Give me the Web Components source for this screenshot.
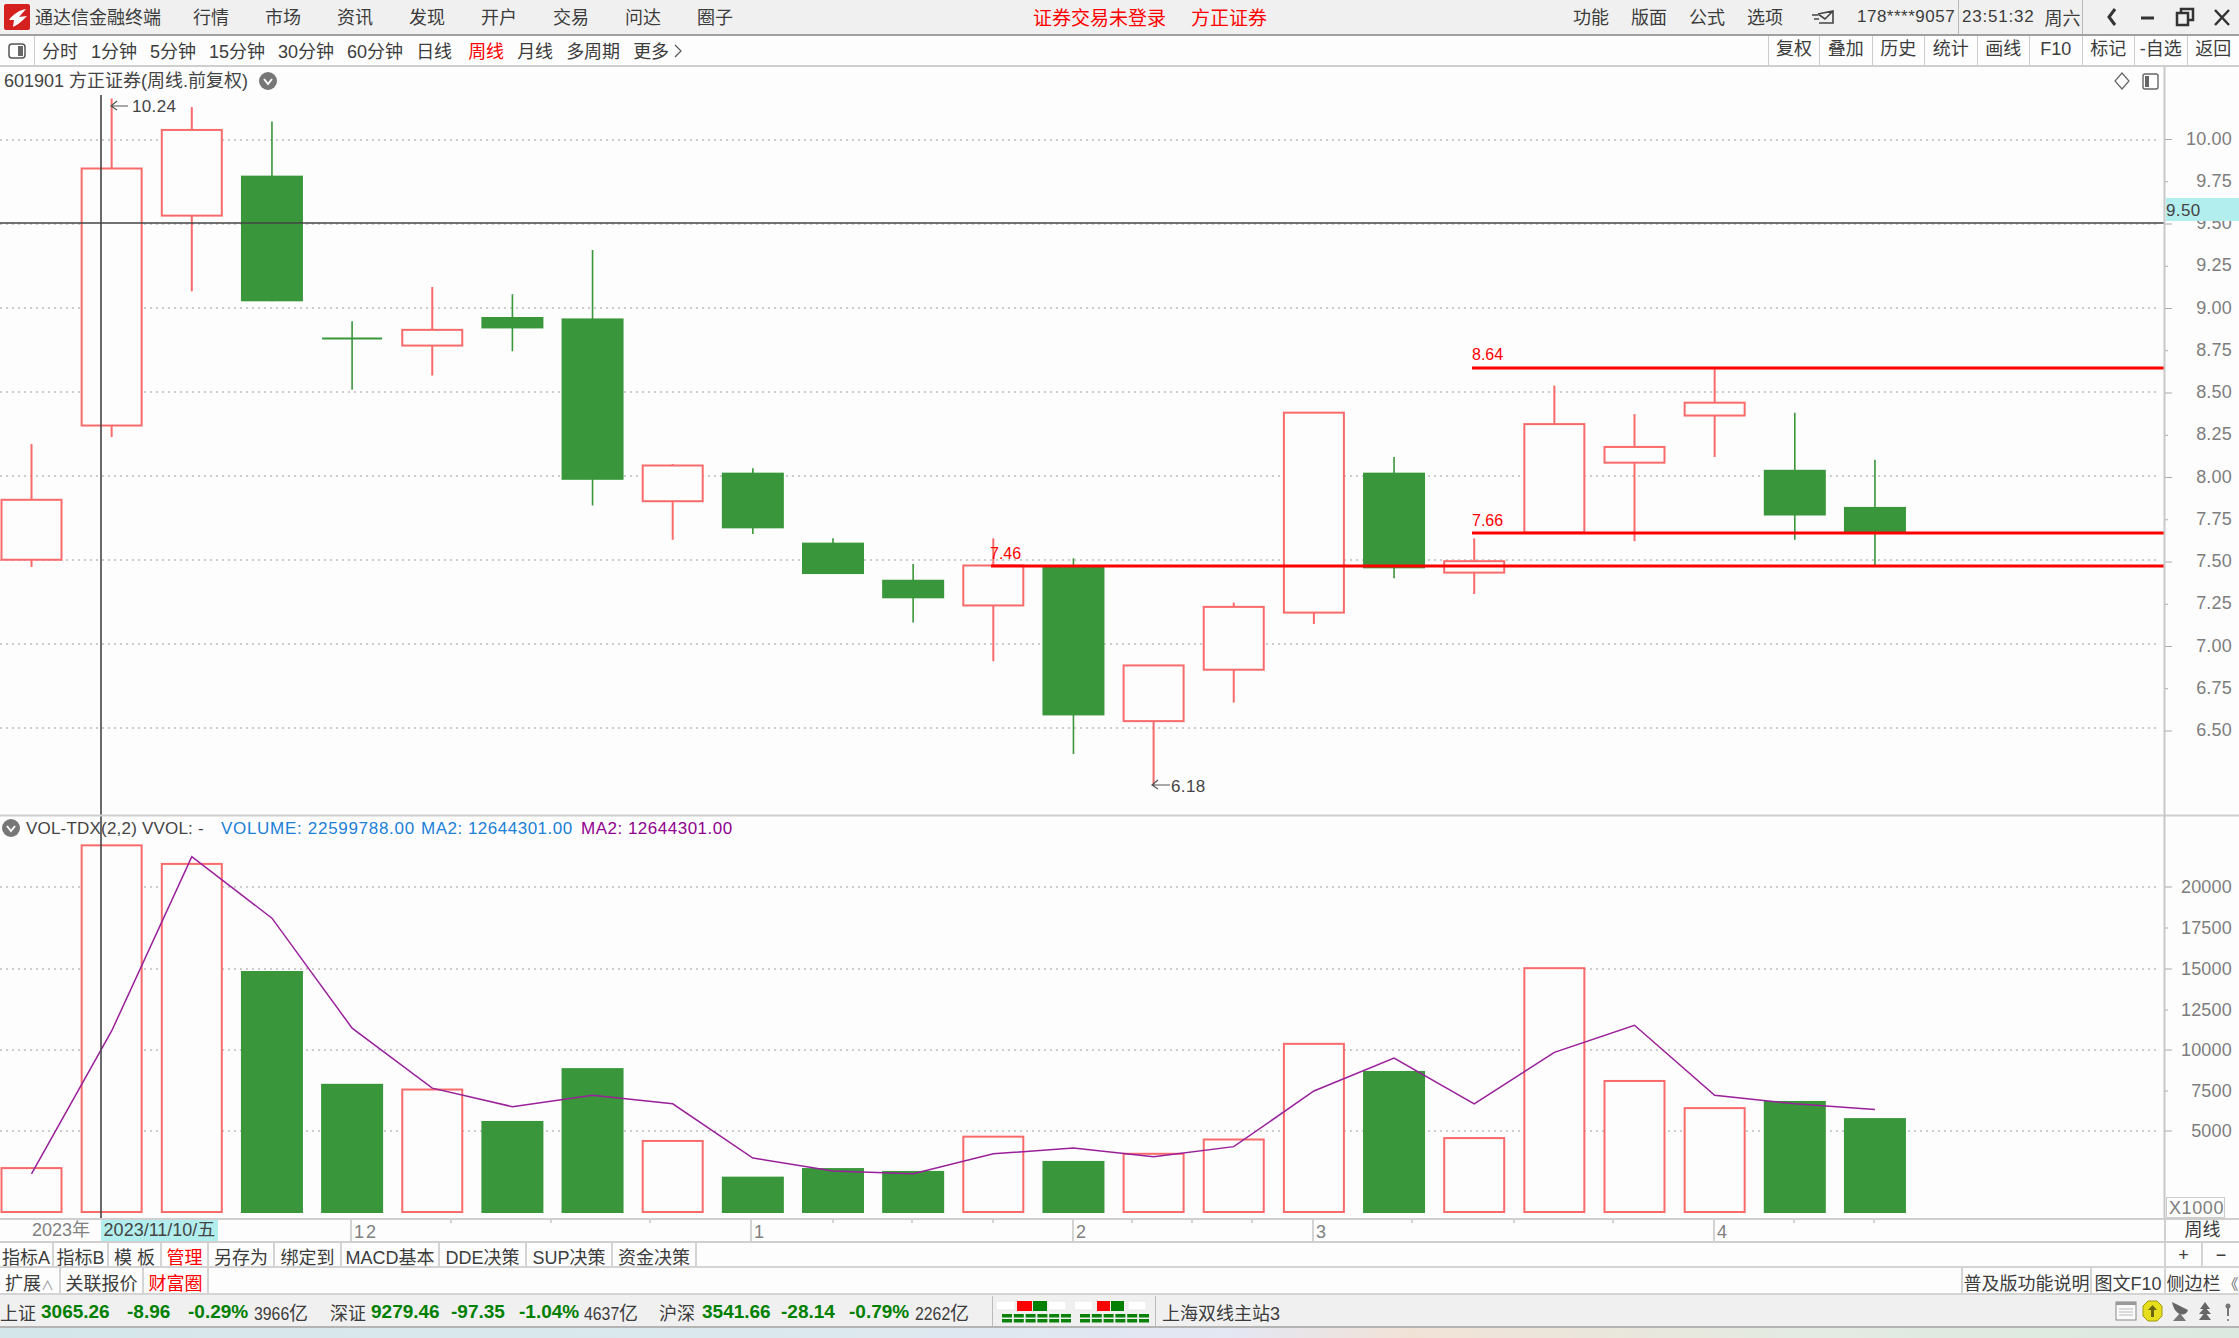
<!DOCTYPE html>
<html lang="zh">
<head>
<meta charset="utf-8">
<title>通达信金融终端</title>
<style>
  html, body { margin: 0; padding: 0; background: #fdfdfd; overflow: hidden; }
  body { width: 2239px; height: 1338px; display: flex; flex-direction: column;
    font: 18px "Liberation Sans", "Noto Sans CJK SC", sans-serif; color: #3c3c3c; }
</style>
</head>
<body>
<tdx-titlebar></tdx-titlebar>
<tdx-toolbar></tdx-toolbar>
<tdx-kline></tdx-kline>
<tdx-dateaxis></tdx-dateaxis>
<tdx-tabrow h="23">
  <tdx-tab w="54">指标A</tdx-tab><tdx-tab w="55">指标B</tdx-tab><tdx-tab w="53">模 板</tdx-tab>
  <tdx-tab w="47" red>管理</tdx-tab><tdx-tab w="66">另存为</tdx-tab><tdx-tab w="67">绑定到</tdx-tab>
  <tdx-tab w="98">MACD基本</tdx-tab><tdx-tab w="87">DDE决策</tdx-tab><tdx-tab w="86">SUP决策</tdx-tab>
  <tdx-tab w="84">资金决策</tdx-tab>
  <tdx-tab slot="right" w="37">+</tdx-tab><tdx-tab slot="right" w="38">−</tdx-tab>
</tdx-tabrow>
<tdx-tabrow h="25">
  <tdx-tab w="61">扩展<small style="color:#999;font-size:13px">∧</small></tdx-tab><tdx-tab w="83">关联报价</tdx-tab><tdx-tab w="65" red>财富圈</tdx-tab>
  <tdx-tab slot="right" w="129">普及版功能说明</tdx-tab><tdx-tab slot="right" w="74">图文F10</tdx-tab><tdx-tab slot="right" w="75">侧边栏 <small style="color:#666;font-size:15px;margin-left:-2px">《</small></tdx-tab>
</tdx-tabrow>
<tdx-statusbar></tdx-statusbar>
<tdx-desktop></tdx-desktop>

<script>
// Top window bar: logo, menus, red login notice, clock and window buttons
class TdxTitlebar extends HTMLElement {
  connectedCallback() {
    const menus = ['行情', '市场', '资讯', '发现', '开户', '交易', '问达', '圈子'];
    const right = ['功能', '版面', '公式', '选项'];
    this.attachShadow({ mode: 'open' }).innerHTML = `
      <style>
        :host { display: flex; align-items: center; height: 34px; flex: none; background: #f0f0f0;
          border-bottom: 2px solid #a0a0a0; white-space: nowrap; position: relative; }
        .logo { width: 26px; height: 26px; margin-left: 4px; flex: none; }
        .name { margin: -2px 0 0 5px; width: 158px; }
        .menus { display: flex; gap: 36px; width: 840px; margin-top: -2px; }
        .notice { color: #f00; font-size: 19px; width: 135px; margin-top: -2px; }
        .notice.b { margin-left: 23px; width: 382px; }
        .right { display: flex; gap: 22px; width: 238px; margin-top: -2px; }
        .mail { width: 24px; height: 18px; margin-right: 22px; flex: none; }
        .user { width: 101px; letter-spacing: .5px; font-size: 17px; }
        .clock { width: 125px; height: 34px; box-sizing: border-box; display: flex; align-items: center;
          border-left: 1px solid #b8b8b8; border-right: 1px solid #b8b8b8; padding-left: 3px; font-size: 17px; letter-spacing: .8px; }
        .clock span { margin-left: 10px; font-size: 18px; letter-spacing: 0; }
        svg.btn { width: 156px; height: 34px; flex: none; }
      </style>
      <svg class="logo" viewBox="0 0 26 26"><rect width="26" height="26" rx="2" fill="#d4201f"/>
        <path d="M22 5 C16 6 9 10 5 16 L10 16 L9 23 C14 21 19 16 23 12 L15 13 Z" fill="#fff"/></svg>
      <span class="name">通达信金融终端</span>
      <div class="menus">${menus.map(m => `<span>${m}</span>`).join('')}</div>
      <span class="notice">证券交易未登录</span><span class="notice b">方正证券</span>
      <div class="right">${right.map(m => `<span>${m}</span>`).join('')}</div>
      <svg class="mail" viewBox="0 0 24 18" fill="none" stroke="#444" stroke-width="1.6">
        <path d="M7 6 L22 3 V15 H8 M1 7 H7 M3 11 H8 M7 6 L14 11 L22 3"/></svg>
      <span class="user">178****9057</span>
      <div class="clock">23:51:32<span>周六</span></div>
      <svg class="btn" viewBox="0 0 156 34" fill="none" stroke="#333" stroke-width="3">
        <path d="M32 9 L26 17 L32 25"/><path d="M58 18 H71" />
        <rect x="94" y="13" width="11" height="12" stroke-width="2.5"/><path d="M98 12 V9 H110 V20 H106" stroke-width="2.5"/>
        <path d="M132 10 L146 25 M146 10 L132 25" stroke-width="2.5"/>
      </svg>`;
  }
}

// Period selector and the right hand function buttons
class TdxToolbar extends HTMLElement {
  connectedCallback() {
    const periods = ['分时', '1分钟', '5分钟', '15分钟', '30分钟', '60分钟', '日线', '周线', '月线', '多周期'];
    const tools = ['复权', '叠加', '历史', '统计', '画线', 'F10', '标记', '-自选', '返回'];
    this.attachShadow({ mode: 'open' }).innerHTML = `
      <style>
        :host { display: flex; align-items: center; height: 29px; flex: none; background: #fdfdfd;
          border-bottom: 2px solid #cfcfcf; white-space: nowrap; }
        .toggle { width: 35px; height: 29px; box-sizing: border-box; border-right: 1px solid #ccc; flex: none;
          display: flex; align-items: center; justify-content: center; }
        .periods { display: flex; gap: 13px; padding-left: 7px; flex: 1; align-items: center; margin-top: -2px; }
        .on { color: #f00; margin-left: 3px; }
        .tools { display: grid; grid-template-columns: 51px repeat(8, 52.5px); }
        .tools span { text-align: center; border-left: 1px solid #ccc; line-height: 27px; padding-bottom: 2px; box-sizing: border-box; }
      </style>
      <div class="toggle"><svg width="18" height="16" viewBox="0 0 18 16"><rect x="1" y="1" width="16" height="14" rx="3" fill="#fff" stroke="#555" stroke-width="1.5"/><rect x="10" y="3" width="5" height="10" fill="#666"/></svg></div>
      <div class="periods">
        ${periods.map(p => `<span class="${p === '周线' ? 'on' : ''}">${p}</span>`).join('')}
        <span>更多 <svg width="8" height="14" viewBox="0 0 8 14" fill="none" stroke="#555" stroke-width="1.2"><path d="M1 1 L7 7 L1 13"/></svg></span>
      </div>
      <div class="tools">${tools.map(t => `<span>${t}</span>`).join('')}</div>`;
  }
}

// Candles and volume bars, drawn in one svg using page coordinates
const UNIT = 168;
const priceY = p => 476 + (8 - p) * UNIT;
const centerX = i => 31.5 + i * 80.15;
const S = 1338 / 937;

// [wick top, body top, body bottom, wick bottom, up?, volume top] in the 1568 wide scale
const BARS = [
  [311, 350, 392, 397, 1, 818], [69, 118, 298, 306, 1, 592], [75, 91, 151, 204, 1, 605],
  [85, 123, 211, 211, 0, 680], [225, 237, 237, 273, 0, 759], [201, 231, 242, 263, 1, 763],
  [206, 222, 230, 246, 0, 785], [175, 223, 336, 354, 0, 748], [325, 326, 351, 378, 1, 799],
  [328, 331, 370, 374, 0, 824], [377, 380, 402, 402, 0, 818], [395, 406, 419, 436, 0, 820],
  [377, 396, 424, 463, 1, 796], [391, 397, 501, 528, 0, 813], [466, 466, 505, 550, 1, 808],
  [422, 425, 469, 492, 1, 798], [289, 289, 429, 437, 1, 731], [320, 331, 398, 405, 0, 750],
  [377, 393, 401, 416, 1, 797], [270, 297, 373, 373, 1, 678], [290, 313, 324, 379, 1, 757],
  [258, 282, 291, 320, 1, 776], [289, 329, 361, 378, 0, 771], [322, 355, 373, 396, 0, 783]
];
const MA = [822, 722, 600, 643, 720, 762, 775, 767, 773, 811, 820, 822, 808, 804, 810, 803, 764, 741, 773, 737, 718, 767, 773, 777];
const VOL_LEVELS = [[20000, 887], [17500, 928], [15000, 969], [12500, 1010], [10000, 1050], [7500, 1091], [5000, 1131]];

class TdxKline extends HTMLElement {
  connectedCallback() {
    let s = '';
    const RED = '#f96b6b', GREEN = '#39963a';
    // grid lines and axis
    for (let p = 10; p >= 6.5; p -= 0.5) s += `<line class="dot" x1="0" x2="2158" y1="${priceY(p)}" y2="${priceY(p)}"/>`;
    for (const [v, y] of VOL_LEVELS) {
      if (v % 5000 === 0) s += `<line class="dot" x1="0" x2="2158" y1="${y}" y2="${y}"/>`;
      s += `<line class="tick" x1="2165" x2="${v % 5000 === 0 ? 2172 : 2168}" y1="${y}" y2="${y}"/><text class="ax" x="2232" y="${y + 6}" text-anchor="end">${v}</text>`;
    }
    for (let p = 10; p >= 6.5; p -= 0.25) {
      const y = 139.5 + (10 - p) * 169;
      s += `<line class="tick" x1="2165" x2="${(p * 2) % 1 === 0 ? 2172 : 2168}" y1="${y}" y2="${y}"/><text class="ax" x="2232" y="${y + 5}" text-anchor="end">${p.toFixed(2)}</text>`;
    }
    // candles
    BARS.forEach((b, i) => {
      const x = centerX(i), [wt, bt, bb, wb, up, vt] = b.map((v, k) => k === 4 ? v : v * S);
      const col = up ? RED : GREEN;
      s += `<line x1="${x}" x2="${x}" y1="${wt}" y2="${wb}" stroke="${col}" stroke-width="${up ? 2 : 1.6}"/>`;
      if (bb - bt < 2) s += `<line x1="${x - 30}" x2="${x + 30}" y1="${bt}" y2="${bt}" stroke="${col}" stroke-width="2"/>`;
      else if (up) s += `<rect x="${x - 30}" y="${bt}" width="60" height="${bb - bt}" fill="#fdfdfd" stroke="${col}" stroke-width="2"/>`;
      else s += `<rect x="${x - 31}" y="${bt}" width="62" height="${bb - bt}" fill="${col}"/>`;
      if (up) s += `<rect x="${x - 30}" y="${vt}" width="60" height="${1212 - vt}" fill="#fdfdfd" stroke="${col}" stroke-width="2"/>`;
      else s += `<rect x="${x - 31}" y="${vt}" width="62" height="${1213 - vt}" fill="${col}"/>`;
    });
    // purple moving average
    s += `<polyline fill="none" stroke="#9a1f9a" stroke-width="1.5" points="${MA.map((v, i) => `${centerX(i)},${v * S}`).join(' ')}"/>`;
    // drawn price levels
    for (const [x, y, t, ty] of [[1472, 368, '8.64', 360], [1472, 533, '7.66', 526], [991, 566, '7.46', 559]]) {
      s += `<line x1="${x}" x2="2164" y1="${y}" y2="${y}" stroke="#f00" stroke-width="3"/><text class="lvl" x="${x - (x === 991 ? 1 : 0)}" y="${ty}">${t}</text>`;
    }
    // high and low markers
    s += `<path d="M128 106 H112 M117 101 L111 106 L117 110" fill="none" stroke="#555" stroke-width="1.2"/><text class="tx" x="132" y="112">10.24</text>`;
    s += `<path d="M1170 785 H1153 M1158 780 L1152 785 L1158 789" fill="none" stroke="#555" stroke-width="1.2"/><text class="tx" x="1171" y="792">6.18</text>`;
    // crosshair with current price tag
    s += `<line x1="0" x2="2164" y1="223" y2="223" stroke="#444" stroke-width="1.6"/>`;
    s += `<line x1="101" x2="101" y1="95" y2="1218" stroke="#444" stroke-width="1.6"/>`;
    s += `<rect x="2166" y="198" width="73" height="23" fill="#b2eeee"/><text class="tx" x="2166" y="216">9.50</text>`;
    // panes
    s += `<line x1="0" x2="2239" y1="815.5" y2="815.5" stroke="#cfcfcf" stroke-width="2"/>`;
    s += `<line x1="2164.5" x2="2164.5" y1="67" y2="1218" stroke="#c8c8c8" stroke-width="2"/>`;
    s += `<rect x="2166.5" y="1197.5" width="58" height="20" fill="none" stroke="#ccc"/><text class="ax" x="2169" y="1214" style="letter-spacing:.6px">X1000</text>`;
    // title rows
    const chevron = (cx, cy) => `<circle cx="${cx}" cy="${cy}" r="9" fill="#777"/><path d="M${cx - 4} ${cy - 2} L${cx} ${cy + 3} L${cx + 4} ${cy - 2}" fill="none" stroke="#fff" stroke-width="2"/>`;
    s += `<text class="tx" x="4" y="87" style="font-size:18px;letter-spacing:0">601901 方正证券(周线.前复权)</text>${chevron(268, 81)}`;
    s += `<path d="M2122 73 L2129 81 L2122 89 L2115 81 Z" fill="none" stroke="#666" stroke-width="1.2"/>`;
    s += `<rect x="2143" y="74" width="15" height="15" rx="2" fill="#fff" stroke="#666" stroke-width="1.4"/><rect x="2145" y="76" width="4" height="11" fill="#666"/>`;
    s += chevron(11, 828);
    s += `<text class="tx" x="26" y="834" style="letter-spacing:.2px">VOL-TDX(2,2) VVOL: -</text>`;
    s += `<text class="tx" x="221" y="834" style="fill:#1a80d8;letter-spacing:.7px">VOLUME: 22599788.00</text>`;
    s += `<text class="tx" x="421" y="834" style="fill:#1a80d8;letter-spacing:.5px">MA2: 12644301.00</text>`;
    s += `<text class="tx" x="581" y="834" style="fill:#900090;letter-spacing:.5px">MA2: 12644301.00</text>`;

    this.attachShadow({ mode: 'open' }).innerHTML = `
      <style>
        :host { display: block; flex: 1; min-height: 0; background: #fdfdfd; }
        svg { display: block; width: 100%; height: 100%; font-family: "Liberation Sans", "Noto Sans CJK SC", sans-serif; }
        .dot { stroke: #bdbdbd; stroke-width: 1.5; stroke-dasharray: 2 4; }
        .tick { stroke: #aaa; stroke-width: 1; }
        .ax { font-size: 18px; fill: #7d7d7d; letter-spacing: .2px; }
        .tx { font-size: 17px; fill: #444; letter-spacing: .35px; }
        .lvl { font-size: 16px; fill: #f00; }
      </style>
      <svg viewBox="0 67 2239 1151">${s}</svg>`;
  }
}

// Time axis under the chart
class TdxDateaxis extends HTMLElement {
  connectedCallback() {
    const majors = [[351, '12'], [751, '1'], [1073, '2'], [1313, '3'], [1714, '4']];
    const minors = [451, 551, 650, 833, 912, 993, 1132, 1192, 1252, 1412, 1514, 1613, 1794, 1874];
    let s = '';
    for (const [x, t] of majors) s += `<line x1="${x}" x2="${x}" y1="0" y2="21" stroke="#c4c4c4" stroke-width="1.5"/><text x="${x + 3}" y="18" letter-spacing="2">${t}</text>`;
    for (const x of minors) s += `<line x1="${x}" x2="${x}" y1="0" y2="3" stroke="#c4c4c4" stroke-width="1.5"/>`;
    this.attachShadow({ mode: 'open' }).innerHTML = `
      <style>
        :host { display: flex; height: 21px; flex: none; border-top: 2px solid #cfcfcf; border-bottom: 2px solid #cfcfcf; background: #fdfdfd; white-space: nowrap; }
        .plot { width: 2164px; position: relative; flex: none; }
        svg { position: absolute; inset: 0; width: 2164px; height: 21px; font: 18px "Liberation Sans", sans-serif; fill: #808080; }
        .year { position: absolute; left: 32px; top: 0; line-height: 21px; color: #808080; }
        .cur { position: absolute; left: 101px; top: 0; width: 117px; height: 21px; line-height: 21px; background: #b2eeee; color: #444; text-align: center; }
        .side { flex: 1; text-align: center; border-left: 2px solid #cfcfcf; line-height: 21px; }
      </style>
      <div class="plot"><svg>${s}</svg><span class="year">2023年</span><span class="cur">2023/11/10/五</span></div>
      <div class="side">周线</div>`;
  }
}

// One row of flat tabs, left and right groups
class TdxTabrow extends HTMLElement {
  constructor() {
    super();
    this.attachShadow({ mode: 'open' }).innerHTML = `
      <style>
        :host { display: flex; justify-content: space-between; flex: none; background: #fdfdfd;
          border-bottom: 2px solid #d4d4d4; white-space: nowrap; }
        div { display: flex; }
      </style>
      <div><slot></slot></div><div><slot name="right"></slot></div>`;
  }
  connectedCallback() { this.style.height = this.getAttribute('h') + 'px'; }
}

class TdxTab extends HTMLElement {
  constructor() {
    super();
    this.attachShadow({ mode: 'open' }).innerHTML = `
      <style>
        :host { display: flex; align-items: center; justify-content: center; box-sizing: border-box; padding-top: 2px; border-right: 2px solid #d4d4d4; }
        :host([red]) { color: #f00; }
        :host([slot="right"]) { border-right: 0; border-left: 2px solid #d4d4d4; }
        span { display: block; white-space: pre; }
      </style><span><slot></slot></span>`;
  }
  connectedCallback() { this.style.width = this.getAttribute('w') + 'px'; }
}

// Index quotes, connection meter and tray icons
class TdxStatusbar extends HTMLElement {
  connectedCallback() {
    const num = (w, t) => `<span class="n" style="width:${w}px">${t}</span>`;
    const vol = (w, a) => `<span class="v" style="width:${w}px"><i>${a}</i><b>亿</b></span>`;
    const name = (w, t) => `<span style="width:${w}px">${t}</span>`;
    const dashes = x => [0, 1, 2, 3, 4, 5].map(k => `<rect x="${x + k * 11.8}" y="18" width="10" height="3.5"/><rect x="${x + k * 11.8}" y="23" width="10" height="3.5"/>`).join('');
    this.attachShadow({ mode: 'open' }).innerHTML = `
      <style>
        :host { display: flex; align-items: center; height: 33px; flex: none; background: #f0f0f0; white-space: nowrap;
          border-bottom: 2px solid #b4b4b4; box-sizing: border-box; }
        span { display: block; flex: none; position: relative; top: 1px; }
        .n { color: #008000; font-weight: bold; font-size: 19px; }
        .v i { display: inline-block; font-style: normal; transform: scaleX(.88); transform-origin: left; margin-right: -5px; }
        .v b { font-weight: normal; font-size: 19px; }
        .meter { width: 162px; height: 30px; flex: none; border-left: 1px solid #bbb; border-right: 1px solid #bbb; box-sizing: content-box; }
        .host { margin-left: 6px; width: 953px; }
        .tray { width: 120px; height: 24px; flex: none; }
      </style>
      ${name(41, '上证')}${num(86, '3065.26')}${num(61, '-8.96')}${num(66, '-0.29%')}${vol(76, '3966')}
      ${name(41, '深证')}${num(80, '9279.46')}${num(68, '-97.35')}${num(65, '-1.04%')}${vol(75, '4637')}
      ${name(43, '沪深')}${num(79, '3541.66')}${num(68, '-28.14')}${num(66, '-0.79%')}${vol(77, '2262')}
      <svg class="meter" viewBox="0 0 162 30">
        <g fill="#fff" stroke="#e8e8e8"><rect x="3" y="5" width="19" height="9"/><rect x="55" y="5" width="18" height="9"/><rect x="81" y="5" width="19" height="9"/><rect x="135" y="5" width="18" height="9"/></g>
        <rect x="24" y="5" width="15" height="10" fill="#f00"/><rect x="40" y="5" width="14" height="10" fill="#008000"/>
        <rect x="104" y="5" width="13" height="10" fill="#f00"/><rect x="118" y="5" width="13" height="10" fill="#008000"/>
        <g fill="#0a820a">${dashes(9)}${dashes(87)}</g>
      </svg>
      <span class="host">上海双线主站3</span>
      <svg class="tray" viewBox="0 0 120 24">
        <rect x="1" y="3" width="20" height="18" fill="#fafafa" stroke="#888"/><rect x="1" y="3" width="20" height="3" fill="#999"/><path d="M4 10 H18 M4 13 H18 M4 16 H18" stroke="#bbb"/>
        <path d="M33 2 H42 L47 7 V17 L42 22 H33 L28 17 V7 Z" fill="#e6de1c" stroke="#a09a10"/><path d="M37.5 6 L33 11 H36 V18 H39 V11 H42 Z" fill="#6a6510"/>
        <path d="M57 3 L73 11 C71 18 60 18 57 3 Z" fill="#666"/><path d="M65 14 L58 22 H71 Z" fill="#777"/>
        <path d="M90 3 L85 10 H95 Z M90 8 L84 15 H96 Z M90 13 L84 21 H96 Z" fill="#666"/>
        <path d="M113 5 V17" stroke="#777" stroke-width="2"/><circle cx="113" cy="7" r="2.5" fill="#777"/><circle cx="113" cy="21" r="1" fill="#777"/>
      </svg>`;
  }
}

// Strip of the wallpaper showing under the window
class TdxDesktop extends HTMLElement {
  connectedCallback() {
    this.attachShadow({ mode: 'open' }).innerHTML = `
      <style>:host { display: block; height: 10px; flex: none;
        background: linear-gradient(90deg, #d5e6ea 0%, #dbe9ee 35%, #e4e7f4 55%, #f1e2d6 63%, #e4ebe2 80%, #dbe9e0 100%); }</style>`;
  }
}

customElements.define('tdx-titlebar', TdxTitlebar);
customElements.define('tdx-toolbar', TdxToolbar);
customElements.define('tdx-kline', TdxKline);
customElements.define('tdx-dateaxis', TdxDateaxis);
customElements.define('tdx-tabrow', TdxTabrow);
customElements.define('tdx-tab', TdxTab);
customElements.define('tdx-statusbar', TdxStatusbar);
customElements.define('tdx-desktop', TdxDesktop);
</script>
</body>
</html>
